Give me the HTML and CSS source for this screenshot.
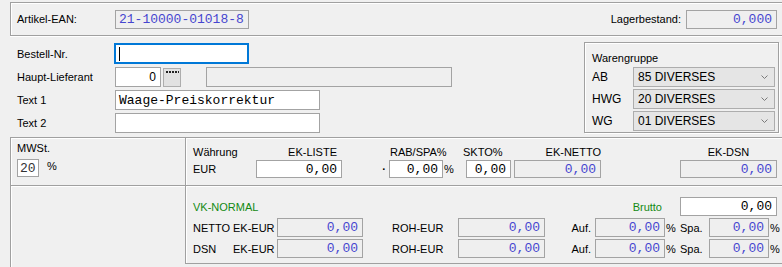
FILE: index.html
```html
<!DOCTYPE html>
<html lang="de">
<head>
    <meta charset="UTF-8">
    <meta name="viewport" content="width=device-width, initial-scale=1.0">
    <title>Artikel</title>
    <link rel="stylesheet" href="styles.css">
</head>
<body>
    <div class="kopf">
        <span class="text breit">Artikel-EAN:</span>
        <span class="feld grau mono blau ean">21-10000-01018-8</span>
        <span class="text lager-text">Lagerbestand:</span>
        <span class="feld grau mono blau rechts lager">0,000</span>
    </div>

    <div class="mitte">
        <div class="stamm">
            <div class="zeile">
                <span class="text breit">Bestell-Nr.</span>
                <span class="feld fokus bestell"><i class="cursor"></i></span>
            </div>
            <div class="zeile">
                <span class="text breit">Haupt-Lieferant</span>
                <span class="feld rechts lieferant">0</span>
                <span class="knopf"><i class="punkte"></i></span>
                <span class="feld grau lief-name"></span>
            </div>
            <div class="zeile">
                <span class="text breit">Text 1</span>
                <span class="feld mono text-feld">Waage-Preiskorrektur</span>
            </div>
            <div class="zeile">
                <span class="text breit">Text 2</span>
                <span class="feld mono text-feld"></span>
            </div>
        </div>

        <div class="warengruppe">
            <div class="wg-titel">Warengruppe</div>
            <div class="wg-zeile">
                <span class="wg-kurz">AB</span>
                <span class="auswahl">85 DIVERSES<svg class="pfeil" width="7" height="4" viewBox="0 0 7 4"><polyline points="0.5,0.5 3.5,3.5 6.5,0.5" fill="none" stroke="#7a7a7a"/></svg></span>
            </div>
            <div class="wg-zeile">
                <span class="wg-kurz">HWG</span>
                <span class="auswahl">20 DIVERSES<svg class="pfeil" width="7" height="4" viewBox="0 0 7 4"><polyline points="0.5,0.5 3.5,3.5 6.5,0.5" fill="none" stroke="#7a7a7a"/></svg></span>
            </div>
            <div class="wg-zeile">
                <span class="wg-kurz">WG</span>
                <span class="auswahl">01 DIVERSES<svg class="pfeil" width="7" height="4" viewBox="0 0 7 4"><polyline points="0.5,0.5 3.5,3.5 6.5,0.5" fill="none" stroke="#7a7a7a"/></svg></span>
            </div>
        </div>
    </div>

    <div class="unten">
        <div class="links">
            <div class="tafel mwst">
                <div class="kopfzeile">MWSt.</div>
                <div class="zeile">
                    <span class="feld mono mwst-feld">20</span>
                    <span class="mwst-pz">%</span>
                </div>
            </div>
            <div class="tafel leer"></div>
        </div>

        <div class="rechts-spalte">
            <div class="tafel ek">
                <span>Währung</span>
                <span class="k-liste">EK-LISTE</span>
                <span></span>
                <span class="k-rab">RAB/SPA%</span>
                <span></span>
                <span class="k-skto">SKTO%</span>
                <span></span>
                <span class="k-netto">EK-NETTO</span>
                <span></span>
                <span class="k-dsn">EK-DSN</span>

                <span>EUR</span>
                <span class="feld mono rechts">0,00</span>
                <span class="punkt">·</span>
                <span class="feld mono rechts">0,00</span>
                <span class="pz">%</span>
                <span class="feld mono rechts">0,00</span>
                <span></span>
                <span class="feld grau mono blau rechts">0,00</span>
                <span></span>
                <span class="feld grau mono blau rechts">0,00</span>
            </div>

            <div class="tafel vk">
                <span class="gruen vk-titel">VK-NORMAL</span>
                <span class="gruen brutto">Brutto</span>
                <span class="feld mono rechts brutto-feld">0,00</span>

                <span>NETTO</span>
                <span>EK-EUR</span>
                <span class="feld grau mono blau rechts">0,00</span>
                <span></span>
                <span>ROH-EUR</span>
                <span class="feld grau mono blau rechts">0,00</span>
                <span class="auf">Auf.</span>
                <span class="feld grau mono blau rechts">0,00</span>
                <span class="pz">%</span>
                <span>Spa.</span>
                <span class="feld grau mono blau rechts">0,00</span>
                <span class="pz-ende">%</span>

                <span>DSN</span>
                <span>EK-EUR</span>
                <span class="feld grau mono blau rechts">0,00</span>
                <span></span>
                <span>ROH-EUR</span>
                <span class="feld grau mono blau rechts">0,00</span>
                <span class="auf">Auf.</span>
                <span class="feld grau mono blau rechts">0,00</span>
                <span class="pz">%</span>
                <span>Spa.</span>
                <span class="feld grau mono blau rechts">0,00</span>
                <span class="pz-ende">%</span>
            </div>
        </div>
    </div>
</body>
</html>
```

FILE: styles.css
```css
body{
    margin: 0;
    width: 782px;
    height: 267px;
    overflow: hidden;
    background: #f0f0f0; /* Dialog-Grau */
    font-family: "Liberation Sans", Arial, sans-serif;
    font-size: 11px;
    color: #000;
}

/* ---------- Eingabefelder ---------- */
.feld{
    box-sizing: border-box;
    display: flex;
    align-items: center;
    height: 20px;
    padding: 0 3px;
    border: 1px solid #a3a3a3;
    background: #fff;
    white-space: nowrap;
    overflow: hidden;
}
.grau{
    background: #efefef; /* nur lesen */
}
.mono{
    font-family: "Liberation Mono", "Courier New", monospace;
    font-size: 13px;
}
.blau{
    color: #4646cf;
}
.rechts{
    justify-content: flex-end;
    padding-right: 4px;
}
.gruen{
    color: #138a13;
}

/* ---------- Kopfbereich ---------- */
.kopf{
    display: flex;
    align-items: center;
    height: 32px;
    margin: 2px 0 0 10px;
    padding-left: 6px;
    border-top: 1px solid #a0a0a0;
    border-left: 1px solid #a0a0a0;
    border-bottom: 1px solid #a0a0a0;
    box-shadow: inset 1px 1px 0 #fff, 0 1px 0 #fff;
}
.breit{
    width: 98px;
    flex: none;
}
.ean{
    width: 134px;
    height: 19px;
}
.lager-text{
    margin-left: auto;
    margin-right: 5px;
}
.lager{
    width: 91px;
    height: 19px;
    margin-right: 5px;
}

/* ---------- Mitte ---------- */
.mitte{
    display: flex;
    height: 101px;
}
.stamm{
    display: flex;
    flex-direction: column;
    gap: 3px;
    padding: 7px 0 0 17px;
}
.zeile{
    display: flex;
    align-items: center;
}
.bestell{
    width: 135px;
    height: 21px;
    margin-left: -1px;
    border: 2px solid #0078d7;
}
.cursor{
    width: 1px;
    height: 14px;
    background: #000;
}
.lieferant{
    width: 46px;
    font-size: 12px;
}
.knopf{
    box-sizing: border-box;
    width: 18px;
    height: 19px;
    margin-left: 2px;
    padding: 2px 0 0 2px;
    border: 1px solid #adadad;
    background: #e1e1e1;
}
.punkte{
    display: block;
    width: 13px;
    height: 2px;
    background: repeating-linear-gradient(to right, #222 0 2px, transparent 2px 3px);
}
.lief-name{
    width: 246px;
    margin-left: 25px;
}
.text-feld{
    width: 205px;
}

.warengruppe{
    box-sizing: border-box;
    width: 195px;
    height: 91px;
    margin: 6px 3px 0 auto;
    padding: 8px 0 0 7px;
    border: 1px solid #a0a0a0;
    box-shadow: inset 1px 1px 0 #fff, 1px 1px 0 #fff;
}
.wg-titel{
    height: 14px;
    line-height: 14px;
}
.wg-zeile{
    display: flex;
    align-items: center;
    margin-top: 2px;
}
.wg-zeile:first-of-type{
    margin-top: 0;
}
.wg-kurz{
    width: 41px;
    font-size: 12px;
}
.auswahl{
    box-sizing: border-box;
    display: flex;
    align-items: center;
    width: 142px;
    height: 20px;
    padding: 0 6px 0 4px;
    border: 1px solid #adadad;
    background: #e5e5e5;
    font-size: 12px;
}
.pfeil{
    margin-left: auto;
}

/* ---------- Unterer Bereich ---------- */
.unten{
    display: flex;
    height: 130px;
}
.links{
    display: flex;
    flex-direction: column;
    flex: none;
    width: 175px;
    margin-left: 10px;
}
.rechts-spalte{
    display: flex;
    flex-direction: column;
    flex: 1;
    min-width: 0;
}
.tafel{
    box-sizing: border-box;
    border-top: 1px solid #a0a0a0;
    border-left: 1px solid #a0a0a0;
    box-shadow: inset 1px 1px 0 #fff;
}
.mwst{
    height: 48px;
    padding: 3px 0 0 6px;
}
.kopfzeile{
    height: 14px;
    line-height: 14px;
}
.mwst-feld{
    width: 22px;
    height: 18px;
    margin-top: 4px;
    padding-left: 2px;
    color: #333;
}
.mwst-pz{
    margin-left: 8px;
}
.leer{
    flex: 1;
}

/* Einkauf: Kopfzeile + Feldzeile */
.ek{
    display: grid;
    grid-template-columns: 63px 86px 47px 54px 23px 45px 3px 87px 79px 97px;
    grid-template-rows: 14px 18px;
    row-gap: 1px;
    align-items: center;
    height: 48px;
    padding: 7px 0 0 7px;
    white-space: nowrap;
}
.ek .feld{
    height: 18px;
}
.k-liste{
    text-align: right;
    padding-right: 5px;
}
.k-rab{
    padding-left: 1px;
}
.k-skto{
    margin-left: -3px;
}
.k-netto{
    text-align: right;
}
.k-dsn{
    text-align: center;
}
.punkt{
    text-align: right;
    padding-right: 3px;
    font-weight: bold;
}
.pz{
    padding-left: 1px;
}

/* Verkauf */
.vk{
    display: grid;
    grid-template-columns: 40px 44px 86px 29px 66px 87px 50px 70px 15px 29px 60px minmax(0, 1fr);
    grid-template-rows: 19px 19px 19px;
    row-gap: 2px;
    align-items: center;
    height: 79px;
    padding: 11px 0 4px 7px;
    border-bottom: 1px solid #a0a0a0;
    white-space: nowrap;
}
.vk .feld{
    height: 19px;
}
.vk-titel{
    grid-column: 1 / 6;
}
.brutto{
    grid-column: 8 / 9;
    text-align: right;
    padding-right: 3px;
}
.brutto-feld{
    grid-column: 10 / 13;
    margin-right: 5px;
}
.auf{
    text-align: right;
    padding-right: 4px;
}
.pz-ende{
    padding-left: 1px;
}
```
